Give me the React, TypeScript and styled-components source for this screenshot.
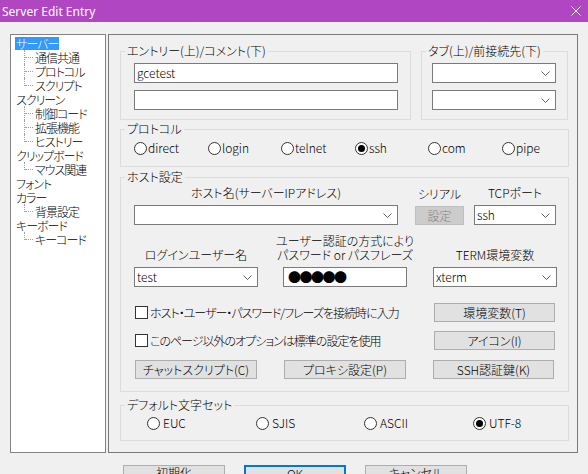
import React from "react";
import styled, { createGlobalStyle } from "styled-components";

const GlobalStyle = createGlobalStyle`
	* {
		box-sizing: border-box;
	}
	html,
	body {
		margin: 0;
		padding: 0;
		background: #f0f0f0;
		overflow: hidden;
	}
	body {
		font-family: "Noto Sans CJK JP", "Noto Sans", sans-serif;
		font-size: 12px;
		font-weight: 300;
		color: #000;
		font-feature-settings: "palt";
	}
`;

interface ITreeNode {
	label: string;
	children: string[];
	selected?: boolean;
}

const tree: ITreeNode[] = [
	{ label: "サーバー", children: ["通信共通", "プロトコル", "スクリプト"], selected: true },
	{ label: "スクリーン", children: ["制御コード", "拡張機能", "ヒストリー"] },
	{ label: "クリップボード", children: ["マウス関連"] },
	{ label: "フォント", children: [] },
	{ label: "カラー", children: ["背景設定"] },
	{ label: "キーボード", children: ["キーコード"] },
];

const protocols = ["direct", "login", "telnet", "ssh", "com", "pipe"];
const charsets = ["EUC", "SJIS", "ASCII", "UTF-8"];

const Chevron = () => (
	<svg width="9" height="5" viewBox="0 0 9 5">
		<polyline points="0.5,0.5 4.5,4.5 8.5,0.5" fill="none" stroke="#606060" strokeWidth="1" />
	</svg>
);

const Combo = (props: { value?: string; width: number }) => (
	<ComboBox $w={props.width}>
		<span>{props.value}</span>
		<Chevron />
	</ComboBox>
);

const Radio = (props: { label: string; checked?: boolean; gap?: number }) => (
	<RadioItem $gap={props.gap ?? 1}>
		<RadioCircle $on={props.checked} />
		<span>{props.label}</span>
	</RadioItem>
);

export default function App() {
	return (
		<Window>
			<GlobalStyle />
			<TitleBar>
				<Title>Server Edit Entry</Title>
				<svg width="10" height="10" viewBox="0 0 10 10">
					<path d="M0.5 0.5 L9.5 9.5 M9.5 0.5 L0.5 9.5" stroke="#fff" strokeWidth="1" />
				</svg>
			</TitleBar>
			<Body>
				<TreePanel>
					{tree.map((node) => (
						<React.Fragment key={node.label}>
							<TreeRow>
								<TreeLabel $selected={node.selected}>{node.label}</TreeLabel>
							</TreeRow>
							{node.children.map((c, i) => (
								<TreeRow key={c} $child>
									<Connector $last={i === node.children.length - 1} />
									<TreeLabel>{c}</TreeLabel>
								</TreeRow>
							))}
						</React.Fragment>
					))}
				</TreePanel>
				<ContentPanel>
					<TopRow>
						<Group $w={291}>
							<Legend>エントリー(上)/コメント(下)</Legend>
							<GroupBody $pt={5} $pb={9} $pl={13}>
								<Stack>
									<TextBox $w={264}>gcetest</TextBox>
									<TextBox $w={264} />
								</Stack>
							</GroupBody>
						</Group>
						<Group $w={147}>
							<Legend>タブ(上)/前接続先(下)</Legend>
							<GroupBody $pt={5} $pb={9} $pl={10}>
								<Stack>
									<Combo width={124} />
									<Combo width={124} />
								</Stack>
							</GroupBody>
						</Group>
					</TopRow>

					<Group $mt={2}>
						<Legend>プロトコル</Legend>
						<GroupBody $pt={5} $pb={11} $pl={13}>
							<RadioRow $cols="74px 73px 74px 73px 74px auto">
								{protocols.map((p) => (
									<Radio key={p} label={p} checked={p === "ssh"} />
								))}
							</RadioRow>
						</GroupBody>
					</Group>

					<Group $mt={3}>
						<Legend>ホスト設定</Legend>
						<GroupBody $pt={2} $pb={12} $pl={13}>
							<HostTopRow>
								<Field $w={264}>
									<FieldLabel>ホスト名(サーバーIPアドレス)</FieldLabel>
									<Combo width={264} />
								</Field>
								<Field $w={49} $ml={17}>
									<FieldLabel>シリアル</FieldLabel>
									<Button $w={49} disabled>
										設定
									</Button>
								</Field>
								<Field $w={82} $ml={10}>
									<FieldLabel>TCPポート</FieldLabel>
									<Combo width={82} value="ssh" />
								</Field>
							</HostTopRow>
							<HostGrid>
								<Field $w={124}>
									<FieldLabel>ログインユーザー名</FieldLabel>
									<Combo width={124} value="test" />
								</Field>
								<Field $w={124}>
									<FieldLabel>
										ユーザー認証の方式により
										<br />
										パスワード or パスフレーズ
									</FieldLabel>
									<TextBox $w={124}>
										<Dots>●●●●●</Dots>
									</TextBox>
								</Field>
								<Field $w={124}>
									<FieldLabel>TERM環境変数</FieldLabel>
									<Combo width={124} value="xterm" />
								</Field>
							</HostGrid>
							<CheckRow $mt={16}>
								<CheckItem>
									<CheckBox />
									<span>ホスト・ユーザー・パスワード/フレーズを接続時に入力</span>
								</CheckItem>
								<Button $w={121}>環境変数(T)</Button>
							</CheckRow>
							<CheckRow $mt={9}>
								<CheckItem>
									<CheckBox />
									<span>このページ以外のオプションは標準の設定を使用</span>
								</CheckItem>
								<Button $w={121}>アイコン(I)</Button>
							</CheckRow>
							<ButtonGrid>
								<Button $w={122}>チャットスクリプト(C)</Button>
								<Button $w={122}>プロキシ設定(P)</Button>
								<Button $w={121}>SSH認証鍵(K)</Button>
							</ButtonGrid>
						</GroupBody>
					</Group>

					<Group $mt={6}>
						<Legend>デフォルト文字セット</Legend>
						<GroupBody $pt={4} $pb={10} $pl={26}>
							<RadioRow $cols="109px 108px 109px auto">
								{charsets.map((c) => (
									<Radio key={c} label={c} checked={c === "UTF-8"} gap={3} />
								))}
							</RadioRow>
						</GroupBody>
					</Group>
				</ContentPanel>
			</Body>
			<Footer>
				<DialogButton>初期化</DialogButton>
				<DialogButton $default>OK</DialogButton>
				<DialogButton>キャンセル</DialogButton>
			</Footer>
		</Window>
	);
}

const Window = styled.div`
	width: 588px;
	height: 474px;
	overflow: hidden;
	background: #f0f0f0;
	display: flex;
	flex-direction: column;
`;

const TitleBar = styled.div`
	height: 22px;
	flex: none;
	background: #b146c2;
	color: #fff;
	display: flex;
	align-items: center;
	justify-content: space-between;
	padding: 0 7px 0 2px;
`;

const Title = styled.span`
	font-family: "Noto Sans", "Liberation Sans", sans-serif;
	font-size: 12px;
	font-weight: 400;
	font-feature-settings: normal;
`;

const Body = styled.div`
	display: flex;
	gap: 2px;
	padding: 12px 0 0 10px;
	flex: none;
`;

const TreePanel = styled.div`
	width: 96px;
	height: 419px;
	background: #fff;
	border: 1px solid #828282;
	padding: 1px 0 0 4px;
`;

const TreeRow = styled.div<{ $child?: boolean }>`
	height: 14px;
	display: flex;
	align-items: center;
	padding-left: ${(p) => (p.$child ? 9 : 0)}px;
`;

const TreeLabel = styled.span<{ $selected?: boolean }>`
	line-height: 13px;
	padding: 0 1px;
	white-space: nowrap;
	letter-spacing: -1px;
	background: ${(p) => (p.$selected ? "#3399ff" : "transparent")};
	color: ${(p) => (p.$selected ? "#fff" : "#000")};
`;

const Connector = styled.span<{ $last?: boolean }>`
	position: relative;
	width: 10px;
	height: 14px;
	flex: none;
	&::before {
		content: "";
		position: absolute;
		left: 0;
		top: 0;
		height: ${(p) => (p.$last ? 8 : 14)}px;
		border-left: 1px dotted #a0a0a0;
	}
	&::after {
		content: "";
		position: absolute;
		left: 1px;
		top: 7px;
		width: 8px;
		border-top: 1px dotted #a0a0a0;
	}
`;

const ContentPanel = styled.div`
	width: 470px;
	height: 419px;
	border: 1px solid #7a7a7a;
	padding: 9px 8px 0 11px;
	display: flex;
	flex-direction: column;
`;

const TopRow = styled.div`
	display: flex;
	gap: 10px;
`;

const Group = styled.fieldset<{ $w?: number; $mt?: number }>`
	margin: ${(p) => p.$mt ?? 0}px 0 0 0;
	border: 1px solid #dcdcdc;
	padding: 0;
	min-width: 0;
	width: ${(p) => (p.$w ? `${p.$w}px` : "auto")};
`;

const Legend = styled.legend`
	margin-left: 4px;
	padding: 0 2px;
	line-height: 14px;
	font-size: 12px;
`;

const GroupBody = styled.div<{ $pt: number; $pb: number; $pl: number }>`
	padding: ${(p) => p.$pt}px 0 ${(p) => p.$pb}px ${(p) => p.$pl}px;
`;

const Stack = styled.div`
	display: flex;
	flex-direction: column;
	gap: 7px;
`;

const TextBox = styled.div<{ $w: number }>`
	width: ${(p) => p.$w}px;
	height: 20px;
	border: 1px solid #7a7a7a;
	background: #fff;
	padding: 0 2px;
	line-height: 18px;
	display: flex;
	align-items: center;
`;

const Dots = styled.span`
	font-size: 13px;
	letter-spacing: -1.5px;
	line-height: 18px;
	font-weight: 400;
	font-feature-settings: normal;
	margin-left: 2px;
`;

const ComboBox = styled.div<{ $w: number }>`
	width: ${(p) => p.$w}px;
	height: 20px;
	border: 1px solid #7a7a7a;
	background: #fff;
	padding: 0 5px 0 2px;
	display: flex;
	align-items: center;
	justify-content: space-between;
	line-height: 18px;
`;

const RadioRow = styled.div<{ $cols: string }>`
	display: grid;
	grid-template-columns: ${(p) => p.$cols};
	height: 14px;
	align-items: center;
`;

const RadioItem = styled.label<{ $gap: number }>`
	display: flex;
	align-items: center;
	gap: ${(p) => p.$gap}px;
	line-height: 14px;
`;

const RadioCircle = styled.span<{ $on?: boolean }>`
	width: 13px;
	height: 13px;
	border-radius: 50%;
	border: 1px solid #333;
	background: #fff;
	display: inline-flex;
	align-items: center;
	justify-content: center;
	flex: none;
	&::after {
		content: "";
		width: 7px;
		height: 7px;
		border-radius: 50%;
		background: #000;
		display: ${(p) => (p.$on ? "block" : "none")};
	}
`;

const HostTopRow = styled.div`
	display: flex;
	align-items: flex-end;
`;

const Field = styled.div<{ $w: number; $ml?: number }>`
	width: ${(p) => p.$w}px;
	margin-left: ${(p) => p.$ml ?? 0}px;
	display: flex;
	flex-direction: column;
	gap: 3px;
	align-items: center;
`;

const FieldLabel = styled.div`
	line-height: 14px;
	text-align: center;
	white-space: nowrap;
	margin-bottom: 2px;
`;

const HostGrid = styled.div`
	display: grid;
	grid-template-columns: 149px 150px 124px;
	align-items: end;
	margin-top: 9px;
`;

const CheckRow = styled.div<{ $mt: number }>`
	display: flex;
	align-items: center;
	justify-content: space-between;
	width: 420px;
	margin: ${(p) => p.$mt}px 0 0 1px;
`;

const CheckItem = styled.label`
	display: flex;
	align-items: center;
	gap: 2px;
	line-height: 14px;
	letter-spacing: -1px;
`;

const CheckBox = styled.span`
	width: 13px;
	height: 13px;
	border: 1px solid #333;
	background: #fff;
	flex: none;
`;

const Button = styled.button<{ $w: number }>`
	width: ${(p) => p.$w}px;
	height: 19px;
	padding: 0;
	background: ${(p) => (p.disabled ? "#cccccc" : "#e1e1e1")};
	border: 1px solid ${(p) => (p.disabled ? "#bfbfbf" : "#adadad")};
	color: ${(p) => (p.disabled ? "#838383" : "#000")};
	font: inherit;
	font-size: 12px;
	line-height: 17px;
	display: flex;
	align-items: center;
	justify-content: center;
`;

const ButtonGrid = styled.div`
	display: grid;
	grid-template-columns: 149px 149px 121px;
	margin: 10px 0 0 1px;
`;

const Footer = styled.div`
	display: flex;
	gap: 19px;
	padding: 12px 0 0 123px;
`;

const DialogButton = styled.button<{ $default?: boolean }>`
	width: 102px;
	height: 23px;
	padding: 0;
	background: #e1e1e1;
	border: ${(p) => (p.$default ? "2px solid #0078d7" : "1px solid #adadad")};
	font: inherit;
	font-size: 12px;
	line-height: 14px;
	display: flex;
	justify-content: center;
	align-items: flex-start;
	flex: none;
`;
